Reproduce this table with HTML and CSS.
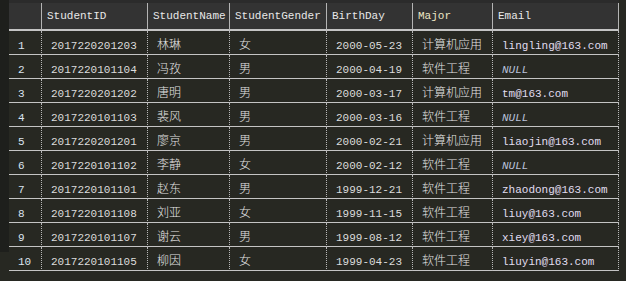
FILE: index.html
```html
<!DOCTYPE html>
<html>
<head>
<meta charset="utf-8">
<link rel="stylesheet" href="styles.css">
</head>
<body>
<div class="page">
  <div class="strip"></div>
  <div class="grid-wrap">
    <table class="grid">
      <colgroup>
        <col class="c0"><col class="c1"><col class="c2"><col class="c3"><col class="c4"><col class="c5"><col class="c6">
      </colgroup>
      <thead>
        <tr>
          <th></th><th>StudentID</th><th>StudentName</th><th>StudentGender</th><th>BirthDay</th><th class="hl">Major</th><th>Email</th>
        </tr>
      </thead>
      <tbody>
        <tr><td class="num">1</td><td>2017220201203</td><td class="cn">林琳</td><td class="cn">女</td><td>2000-05-23</td><td class="cn">计算机应用</td><td class="mail">lingling@163.com</td></tr>
        <tr><td class="num">2</td><td>2017220101104</td><td class="cn">冯孜</td><td class="cn">男</td><td>2000-04-19</td><td class="cn">软件工程</td><td class="null">NULL</td></tr>
        <tr><td class="num">3</td><td>2017220201202</td><td class="cn">唐明</td><td class="cn">男</td><td>2000-03-17</td><td class="cn">计算机应用</td><td class="mail">tm@163.com</td></tr>
        <tr><td class="num">4</td><td>2017220101103</td><td class="cn">裴风</td><td class="cn">男</td><td>2000-03-16</td><td class="cn">软件工程</td><td class="null">NULL</td></tr>
        <tr><td class="num">5</td><td>2017220201201</td><td class="cn">廖京</td><td class="cn">男</td><td>2000-02-21</td><td class="cn">计算机应用</td><td class="mail">liaojin@163.com</td></tr>
        <tr><td class="num">6</td><td>2017220101102</td><td class="cn">李静</td><td class="cn">女</td><td>2000-02-12</td><td class="cn">软件工程</td><td class="null">NULL</td></tr>
        <tr><td class="num">7</td><td>2017220101101</td><td class="cn">赵东</td><td class="cn">男</td><td>1999-12-21</td><td class="cn">软件工程</td><td class="mail">zhaodong@163.com</td></tr>
        <tr><td class="num">8</td><td>2017220101108</td><td class="cn">刘亚</td><td class="cn">女</td><td>1999-11-15</td><td class="cn">软件工程</td><td class="mail">liuy@163.com</td></tr>
        <tr><td class="num">9</td><td>2017220101107</td><td class="cn">谢云</td><td class="cn">男</td><td>1999-08-12</td><td class="cn">软件工程</td><td class="mail">xiey@163.com</td></tr>
        <tr><td class="num">10</td><td>2017220101105</td><td class="cn">柳因</td><td class="cn">女</td><td>1999-04-23</td><td class="cn">软件工程</td><td class="mail">liuyin@163.com</td></tr>
      </tbody>
    </table>
  </div>
</div>
</body>
</html>
```

FILE: styles.css
```css
html, body {
  margin: 0;
  padding: 0;
  background: #272822;
}
.page {
  display: flex;
  align-items: flex-start;
  width: 626px;
  height: 281px;
  overflow: hidden;
}
.strip {
  width: 9px;
  height: 252px;
  background: #1e1f1c;
  flex: none;
}
.grid-wrap {
  padding-top: 3px;
  background: linear-gradient(#2b2b2b, #2b2b2b) top / 100% 3px no-repeat;
}
.grid {
  border-collapse: separate;
  border-spacing: 0;
  table-layout: fixed;
  width: 610px;
  font-family: "Liberation Mono", "Noto Sans CJK SC", monospace;
  font-size: 11px;
  color: #dcdcdc;
}
.c0 { width: 33px; }
.c1 { width: 106px; }
.c2 { width: 82px; }
.c3 { width: 97px; }
.c4 { width: 86px; }
.c5 { width: 80px; }
.c6 { width: 126px; }
.grid th, .grid td {
  box-sizing: border-box;
  text-align: left;
  white-space: nowrap;
  overflow: hidden;
  line-height: 15px;
  font-weight: normal;
}
.grid th {
  background: #333333;
  color: #e8e8e8;
  padding: 6px 0 5px 5px;
  border-right: 1px solid #b4b4b4;
  border-bottom: 2px solid #c4c4c4;
}
.grid th.hl {
  color: #ece6c4;
}
.grid td {
  padding: 8px 0 0 9px;
  height: 24px;
  border-right: 1px dotted #b8b8b8;
  border-bottom: 1px solid #c4c4c4;
}
.grid td.num {
  color: #dbe4f0;
}
.grid td.cn {
  font-size: 12px;
  font-weight: 300;
  color: #e4e4e4;
}
.grid td.mail {
  color: #e0ddf0;
}
.grid td.null {
  font-style: italic;
  color: #b9c2da;
}
```
